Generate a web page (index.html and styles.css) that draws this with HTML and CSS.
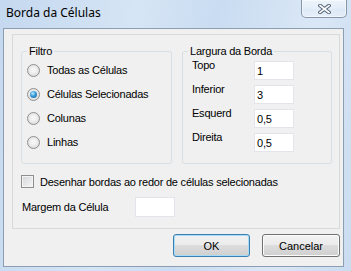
FILE: index.html
```html
<!DOCTYPE html>
<html lang="pt">
<head>
    <meta charset="UTF-8">
    <title>Borda da Células</title>
    <link rel="stylesheet" href="styles.css">
</head>
<body>
    <div class="window">
        <div class="titlebar">
            <span class="title">Borda da Células</span>
            <button class="close" type="button">
                <svg width="13" height="10" viewBox="0 0 13 10">
                    <path d="M2 1.5 L11 8.5 M11 1.5 L2 8.5" stroke="#56657a" stroke-width="3.6" stroke-linecap="square"/>
                    <path d="M2 1.5 L11 8.5 M11 1.5 L2 8.5" stroke="#ffffff" stroke-width="1.6" stroke-linecap="square"/>
                </svg>
            </button>
        </div>

        <div class="client">
            <div class="panel">
                <div class="groups">
                    <fieldset class="group filtro">
                        <legend>Filtro</legend>
                        <div class="options">
                            <div class="option"><span class="radio"></span>Todas as Células</div>
                            <div class="option"><span class="radio checked"><span class="dot"></span></span>Células Selecionadas</div>
                            <div class="option"><span class="radio"></span>Colunas</div>
                            <div class="option"><span class="radio"></span>Linhas</div>
                        </div>
                    </fieldset>

                    <fieldset class="group largura">
                        <legend>Largura da Borda</legend>
                        <div class="fields">
                            <div class="field-row"><span class="field-label">Topo</span><span class="box">1</span></div>
                            <div class="field-row"><span class="field-label">Inferior</span><span class="box">3</span></div>
                            <div class="field-row"><span class="field-label">Esquerd</span><span class="box">0,5</span></div>
                            <div class="field-row"><span class="field-label">Direita</span><span class="box">0,5</span></div>
                        </div>
                    </fieldset>
                </div>

                <div class="check-row"><span class="checkbox"></span>Desenhar bordas ao redor de células selecionadas</div>

                <div class="margin-row">
                    <span class="margin-label">Margem da Célula</span>
                    <span class="box wide"></span>
                </div>
            </div>

            <div class="actions">
                <button class="btn default" type="button">OK</button>
                <button class="btn cancel" type="button">Cancelar</button>
            </div>
        </div>
    </div>
</body>
</html>
```

FILE: styles.css
```css
body {
    margin: 0;
    font-family: "Liberation Sans", Arial, sans-serif;
    font-size: 11px;
    letter-spacing: -0.22px;
    color: #000;
}
.window {
    width: 351px;
    height: 271px;
    box-sizing: border-box;
    background: linear-gradient(100deg, #c4d8ef 0%, #d6e5f5 35%, #c9dcf1 55%, #dae7f6 80%, #cadcf0 100%);
}
.titlebar {
    display: flex;
    justify-content: space-between;
    align-items: flex-start;
    height: 28px;
    padding: 0 4px 0 6px;
}
.title {
    font-family: "Noto Sans", sans-serif;
    font-size: 12px;
    line-height: 16px;
    letter-spacing: 0;
    margin-top: 5px;
}
.close {
    width: 46px;
    height: 18px;
    box-sizing: border-box;
    padding: 0;
    border: 1px solid #8797ab;
    border-top: none;
    border-radius: 0 0 5px 5px;
    background: linear-gradient(rgba(255, 255, 255, 0.55), rgba(255, 255, 255, 0.3) 50%, rgba(255, 255, 255, 0.15) 51%, rgba(255, 255, 255, 0.35));
    box-shadow: inset 0 0 0 1px rgba(255, 255, 255, 0.5);
    display: flex;
    align-items: center;
    justify-content: center;
}
.client {
    margin-left: 3px;
    width: 341px;
    height: 239px;
    box-sizing: border-box;
    border: 1px solid #8d9db2;
    background: #f0f0f0;
    padding: 5px 3px 0 8px;
}
.panel {
    width: 328px;
    height: 195px;
    box-sizing: border-box;
    border: 1px solid #d9d9d9;
    padding: 10px 7px 0 8px;
}
.groups {
    display: flex;
    gap: 10px;
}
.group {
    margin: 0;
    padding: 0;
    height: 119px;
    box-sizing: border-box;
    min-width: 0;
    border: 1px solid #d5dfe5;
    border-radius: 3px;
}
.filtro {
    width: 151px;
}
.largura {
    width: 150px;
}
legend {
    margin-left: 5px;
    padding: 0 2px;
    line-height: 13px;
}
.options {
    padding-left: 5px;
}
.option {
    display: flex;
    align-items: center;
    gap: 7px;
    height: 24px;
}
.radio {
    flex: none;
    width: 13px;
    height: 13px;
    box-sizing: border-box;
    border-radius: 50%;
    border: 1px solid #8f8f8f;
    background: radial-gradient(circle at 50% 45%, #fbfbfb 0, #eeeeee 40%, #d3d3d3 100%);
    display: flex;
    align-items: center;
    justify-content: center;
}
.dot {
    width: 7px;
    height: 7px;
    border-radius: 50%;
    background: radial-gradient(circle at 40% 35%, #b6ecff 0, #3a98d6 45%, #195b8f 100%);
}
.fields {
    padding-left: 9px;
}
.field-row {
    display: flex;
    align-items: flex-start;
    height: 24px;
}
.field-label {
    width: 62px;
    line-height: 13px;
    padding-top: 1px;
}
.box {
    width: 40px;
    height: 19px;
    margin-top: 3px;
    box-sizing: border-box;
    border: 1px solid #e3e5ea;
    background: #fff;
    padding-left: 2px;
    line-height: 19px;
}
.check-row {
    display: flex;
    align-items: center;
    gap: 6px;
    height: 13px;
    margin-top: 11px;
}
.checkbox {
    flex: none;
    width: 13px;
    height: 13px;
    box-sizing: border-box;
    border: 1px solid #8e8f8f;
    background: linear-gradient(135deg, #d2d5d9, #f7f7f7);
    box-shadow: inset 0 0 0 1px #f4f4f4;
}
.margin-row {
    display: flex;
    align-items: center;
    margin-top: 9px;
}
.margin-label {
    width: 113px;
    margin-left: 1px;
}
.box.wide {
    height: 20px;
    margin-top: 0;
}
.actions {
    display: flex;
    justify-content: flex-end;
    gap: 12px;
    margin-top: 5px;
}
.btn {
    height: 23px;
    padding: 0;
    font: inherit;
    color: #000;
    border: 1px solid #707070;
    border-radius: 3px;
    background: linear-gradient(#f2f2f2 0%, #ebebeb 50%, #dddddd 50%, #cfcfcf 100%);
    box-shadow: inset 0 0 0 1px #fcfcfc;
}
.btn.default {
    width: 77px;
    border-color: #3c7fb1;
    box-shadow: inset 0 0 0 1px #a6dcf7;
}
.btn.cancel {
    width: 78px;
}
```
